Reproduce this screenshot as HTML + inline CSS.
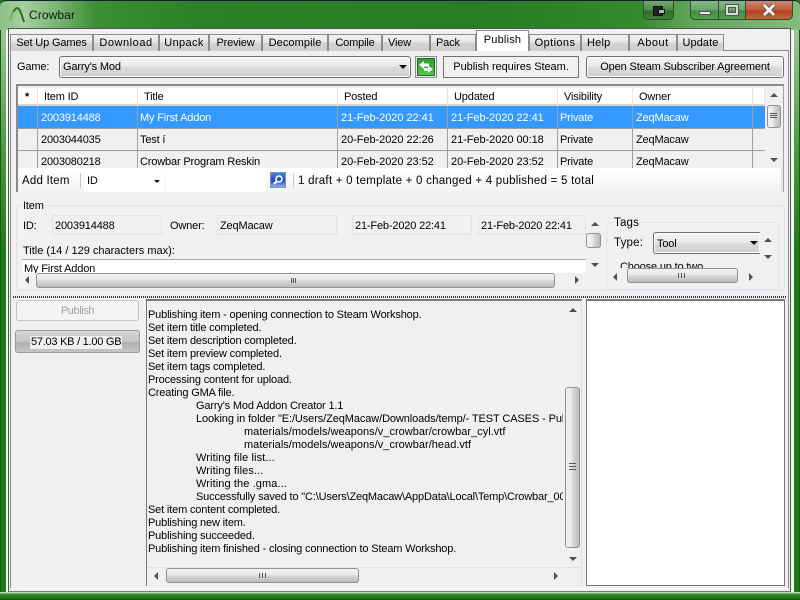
<!DOCTYPE html>
<html><head><meta charset="utf-8"><style>
html,body{margin:0;padding:0;width:800px;height:600px;overflow:hidden;background:#2a7a22}
*{box-sizing:border-box}
body{font:11px/13px "Liberation Sans",sans-serif;color:#000;letter-spacing:-.16px;position:relative}
div,span.a{position:absolute}
.t{position:absolute;white-space:nowrap}
.d{letter-spacing:-.05px}
.frame{left:0;top:0;width:800px;height:600px;border-radius:6px 6px 0 0;background:#2f8a27}
.title{left:0;top:0;width:800px;height:30px;background:linear-gradient(90deg,#8dc088 0,#a6d0a0 3%,#7ab674 7%,#3c8f32 12%,#2c8226 25%,#2a7c22 60%,#338a2b 80%,#5fa558 86%,#84bb7d 100%);border-top:1px solid #123;border-radius:6px 6px 0 0}
.sideL{left:0;top:30px;width:9px;height:570px;background:linear-gradient(90deg,#1d5a17 0,#1d5a17 1px,transparent 1px,transparent 6px,#f4f8f3 6px,#f4f8f3 8px,#f0f0f0 8px),linear-gradient(#9cc896,#4a9a40 120px,#1f7a1a 220px)}
.sideR{left:791px;top:30px;width:9px;height:570px;background:linear-gradient(270deg,#1d5a17 0,#1d5a17 1px,transparent 1px,transparent 6px,#f4f8f3 6px,#f4f8f3 8px,#f0f0f0 8px),linear-gradient(#9cc896,#4a9a40 120px,#1f7a1a 220px)}
.client{left:8px;top:28px;width:783px;height:564px;background:#f0f0f0;border:1px solid #555;border-bottom:1px solid #777}
.bot{left:0;top:592px;width:800px;height:8px;background:linear-gradient(#e4efe2,#2f8a27 30%,#1f7a1a 70%,#174f12)}
.tab{position:absolute;top:34px;height:17px;background:linear-gradient(#f3f3f3,#e6e6e6 45%,#d2d2d2 50%,#cfcfcf);border:1px solid #898c95;border-bottom:none;text-align:center;line-height:16px;letter-spacing:-.15px}
.tab.on{top:30px;height:21px;background:#fff;line-height:18px;z-index:3}
.panel{left:10px;top:50px;width:779px;height:539px;background:#f0f0f0;border:1px solid #898c95;border-bottom:1px solid #fff}
.btn{position:absolute;background:linear-gradient(#f3f3f3,#ebebeb 45%,#dcdcdc 50%,#cfcfcf);border:1px solid #707070;border-radius:3px;text-align:center;box-shadow:inset 0 0 0 1px #fbfbfb}
.hd{position:absolute;top:88px;height:18px;line-height:19px;background:#fff;border-right:1px solid #e4e5e7;border-bottom:2px solid #d5d5d5;padding-left:6px}
.ro{position:absolute;top:215px;height:20px;border:1px solid #dde3ea;background:#f0f0f0;line-height:20px;padding-left:2px;white-space:nowrap;overflow:hidden}
.sb{position:absolute;background:#f0f0f0}
.thumbH{position:absolute;background:linear-gradient(#f2f2f2,#e9e9e9 45%,#d9d9d9 50%,#bcbcbc);border:1px solid #929292;border-radius:3px}
.thumbV{position:absolute;background:linear-gradient(90deg,#f2f2f2,#e9e9e9 45%,#d9d9d9 50%,#bcbcbc);border:1px solid #929292;border-radius:3px}
.up,.dn,.lf,.rt{position:absolute;width:0;height:0}
.up{border:4px solid transparent;border-top:0;border-bottom:4px solid #505050}
.dn{border:4px solid transparent;border-bottom:0;border-top:4px solid #505050}
.lf{border:4px solid transparent;border-left:0;border-right:4px solid #505050}
.rt{border:4px solid transparent;border-right:0;border-left:4px solid #505050}
.gH{position:absolute;width:1px;height:5px;background:#555}
.gV{position:absolute;width:7px;height:1px;background:#555}
.grp{position:absolute;border:1px solid #dde3ea;border-radius:3px}
.splitter{left:13px;top:296px;width:773px;height:2px;background:repeating-linear-gradient(90deg,#333 0,#333 1px,#f0f0f0 1px,#f0f0f0 2px)}
.wb{position:absolute;top:1px;height:19px;border:1px solid #2c5028;border-top:none}
</style></head><body>
<div class="frame"></div>
<div class="title"></div>
<svg style="position:absolute;left:8px;top:6px" width="20" height="20"><path d="M2 15C4 8 7 2 9 2C12 2 14 10 16 16" fill="none" stroke="#2f6d2a" stroke-width="2"/><path d="M2 15C3 12 4 9 6 6" fill="none" stroke="#8dc05a" stroke-width="2"/></svg>
<span class="t" style="left:29px;top:9px;font-size:12px;color:#101a10;letter-spacing:.1px">Crowbar</span>
<div class="wb" style="left:643px;width:31px;border-radius:0 0 5px 5px;background:linear-gradient(#7aa876,#4d8a47 50%,#2e7028 55%,#3d7f36)"></div>
<div style="left:653px;top:6px;width:10px;height:10px;background:#222;border:1px solid #111"></div>
<div style="left:658px;top:9px;width:7px;height:5px;background:#9bc596;border:1px solid #111"></div>
<div class="wb" style="left:690px;width:29px;border-radius:0 0 0 5px;border-right:none;background:linear-gradient(#8bb886,#6ba566 50%,#478a40 55%,#5b9b54)"></div>
<div class="wb" style="left:718px;width:28px;border-right:none;background:linear-gradient(#8bb886,#6ba566 50%,#478a40 55%,#5b9b54)"></div>
<div class="wb" style="left:745px;width:48px;border-radius:0 0 5px 0;background:linear-gradient(#c98a70,#c2593a 50%,#b43e1c 55%,#c2653f)"></div>
<div style="left:699px;top:11px;width:12px;height:4px;background:#e4ebe4;border:1px solid #555"></div>
<div style="left:726px;top:5px;width:12px;height:10px;border:2px solid #d4e0d4;box-shadow:0 0 0 1px #555,inset 0 0 0 1px #555"></div>
<svg style="position:absolute;left:762px;top:4px" width="14" height="12"><path d="M2 1L12 11M12 1L2 11" stroke="#555" stroke-width="4.5"/><path d="M2 1L12 11M12 1L2 11" stroke="#f4f4f4" stroke-width="2.8"/></svg>
<div class="sideL"></div><div class="sideR"></div><div class="bot"></div>
<div class="client"></div>
<div class="panel"></div>
<div class="tab" style="left:10px;width:83px">Set Up Games</div>
<div class="tab" style="left:93px;width:66px;letter-spacing:.55px">Download</div>
<div class="tab" style="left:159px;width:50px;letter-spacing:.35px">Unpack</div>
<div class="tab" style="left:209px;width:53px">Preview</div>
<div class="tab" style="left:262px;width:66px;letter-spacing:.1px">Decompile</div>
<div class="tab" style="left:328px;width:54px">Compile</div>
<div class="tab" style="left:382px;width:48px;text-align:left;padding-left:5px">View</div>
<div class="tab" style="left:430px;width:46px;text-align:left;padding-left:5px">Pack</div>
<div class="tab on" style="left:476px;width:53px;letter-spacing:.2px">Publish</div>
<div class="tab" style="left:529px;width:52px;letter-spacing:.4px">Options</div>
<div class="tab" style="left:581px;width:48px;text-align:left;padding-left:5px;letter-spacing:.2px">Help</div>
<div class="tab" style="left:629px;width:48px;letter-spacing:.5px">About</div>
<div class="tab" style="left:677px;width:47px;letter-spacing:.1px">Update</div>

<span class="t" style="left:17px;top:61px">Game:</span>
<div class="btn" style="left:59px;top:56px;width:352px;height:22px;text-align:left;padding-left:3px;line-height:21px">Garry's Mod</div>
<div class="dn" style="left:399px;top:65px;border-top-color:#111"></div>
<div style="left:415px;top:56px;width:22px;height:22px;border:1px solid #8c8f8c;background:#eee"></div>
<div style="left:417px;top:58px;width:18px;height:18px;background:linear-gradient(#2f9e2b,#58c24e);border:1px solid #1f6d1c"></div>
<svg style="position:absolute;left:417px;top:58px" width="18" height="18"><path d="M2 7L7 3V5.500H12V8.500H7V11Z" fill="#fff"/><path d="M16 11L11 15V13H7V10H11V8Z" fill="#e8f5e8"/></svg>
<div style="left:443px;top:56px;width:136px;height:22px;border:1px solid #707070;background:#f0f0f0;text-align:center;line-height:21px;border-radius:1px;letter-spacing:-.06px">Publish requires Steam.</div>
<div class="btn" style="left:586px;top:56px;width:198px;height:22px;line-height:21px;letter-spacing:-.13px">Open Steam Subscriber Agreement</div>

<div style="left:16px;top:84px;width:768px;height:108px;background:#f0f0f0;border:2px solid #8a8a8a;border-bottom:none;border-right:1px solid #a0a0a0"></div>
<div class="hd" style="left:18px;width:20px;padding-left:7px;font-weight:bold">*</div>
<div class="hd" style="left:38px;width:100px">Item ID</div>
<div class="hd" style="left:138px;width:200px">Title</div>
<div class="hd" style="left:338px;width:110px">Posted</div>
<div class="hd" style="left:448px;width:110px">Updated</div>
<div class="hd" style="left:558px;width:75px">Visibility</div>
<div class="hd" style="left:633px;width:120px">Owner</div>
<div class="hd" style="left:753px;width:12px"></div>
<div style="left:18px;top:106px;width:747px;height:63px;background:#f0f0f0;overflow:hidden">
<div style="left:0;top:0;width:747px;height:22px;background:#3399ff"></div>
</div>
<div style="left:18px;top:128px;width:747px;height:1px;background:#a0a0a0"></div>
<div style="left:18px;top:150px;width:747px;height:1px;background:#a0a0a0"></div>
<div style="left:37px;top:106px;width:1px;height:63px;background:#a0a0a0"></div>
<div style="left:137px;top:106px;width:1px;height:63px;background:#a0a0a0"></div>
<div style="left:337px;top:106px;width:1px;height:63px;background:#a0a0a0"></div>
<div style="left:447px;top:106px;width:1px;height:63px;background:#a0a0a0"></div>
<div style="left:557px;top:106px;width:1px;height:63px;background:#a0a0a0"></div>
<div style="left:632px;top:106px;width:1px;height:63px;background:#a0a0a0"></div>
<div style="left:752px;top:106px;width:1px;height:63px;background:#a0a0a0"></div>
<span class="t" style="left:41px;top:112px;color:#fff">2003914488</span><span class="t" style="left:140px;top:112px;color:#fff">My First Addon</span><span class="t d" style="left:341px;top:112px;color:#fff">21-Feb-2020 22:41</span><span class="t d" style="left:451px;top:112px;color:#fff">21-Feb-2020 22:41</span><span class="t" style="left:560px;top:112px;color:#fff">Private</span><span class="t" style="left:636px;top:112px;color:#fff">ZeqMacaw</span>
<span class="t" style="left:41px;top:134px">2003044035</span><span class="t" style="left:140px;top:134px">Test í</span><span class="t d" style="left:341px;top:134px">20-Feb-2020 22:26</span><span class="t d" style="left:451px;top:134px">21-Feb-2020 00:18</span><span class="t" style="left:560px;top:134px">Private</span><span class="t" style="left:636px;top:134px">ZeqMacaw</span>
<span class="t" style="left:41px;top:156px">2003080218</span><span class="t" style="left:140px;top:156px">Crowbar Program Reskin</span><span class="t d" style="left:341px;top:156px">20-Feb-2020 23:52</span><span class="t d" style="left:451px;top:156px">20-Feb-2020 23:52</span><span class="t" style="left:560px;top:156px">Private</span><span class="t" style="left:636px;top:156px">ZeqMacaw</span>
<div class="sb" style="left:765px;top:86px;width:18px;height:83px"></div>
<div class="up" style="left:770px;top:93px"></div>
<div class="thumbV" style="left:767px;top:105px;width:14px;height:23px"></div>
<div class="gV" style="left:770px;top:113px"></div><div class="gV" style="left:770px;top:115px"></div><div class="gV" style="left:770px;top:117px"></div>
<div class="dn" style="left:770px;top:158px"></div>

<div style="left:18px;top:168px;width:764px;height:25px;background:linear-gradient(#fff,#f3f3f3);border-right:1px solid #ddd"></div>
<span class="t" style="left:22px;top:175px;font-size:11.500px;letter-spacing:.2px">Add Item</span>
<div style="left:80px;top:173px;width:1px;height:15px;background:#c8c8c8"></div>
<div style="left:84px;top:169px;width:80px;height:23px;background:#fff"></div>
<span class="t" style="left:87px;top:175px">ID</span>
<div class="dn" style="left:154px;top:180px;border-width:3px;border-bottom:0;border-top-color:#111"></div>
<div style="left:166px;top:169px;width:100px;height:23px;background:#fff"></div>
<div style="left:270px;top:172px;width:16px;height:16px;background:linear-gradient(#4c7fd6,#1f4fb0 55%,#8fb0ec);border:1px solid #7b93bb"></div>
<svg style="position:absolute;left:270px;top:172px" width="16" height="16"><circle cx="9" cy="7" r="3" fill="none" stroke="#fff" stroke-width="1.500"/><path d="M7 9L4 12" stroke="#fff" stroke-width="2"/></svg>
<div style="left:293px;top:173px;width:1px;height:15px;background:#c8c8c8"></div>
<span class="t" style="left:298px;top:175px;font-size:11.500px;letter-spacing:.24px">1 draft + 0 template + 0 changed + 4 published = 5 total</span>

<div class="grp" style="left:16px;top:205px;width:769px;height:86px"></div>
<span class="t" style="left:22px;top:200px;background:#f0f0f0;padding:0 1px">Item</span>
<span class="t" style="left:23px;top:220px">ID:</span>
<div class="ro" style="left:52px;width:110px">2003914488</div>
<span class="t" style="left:170px;top:220px">Owner:</span>
<div class="ro" style="left:217px;width:120px">ZeqMacaw</div>
<div class="ro" style="left:352px;width:120px">21-Feb-2020 22:41</div>
<div class="ro" style="left:478px;width:108px">21-Feb-2020 22:41</div>
<span class="t" style="left:23px;top:245px;letter-spacing:0">Title (14 / 129 characters max):</span>
<div style="left:22px;top:259px;width:564px;height:14px;background:#fff;border-top:1px solid #a8a8a8;overflow:hidden"><span class="t" style="left:2px;top:3px">My First Addon</span></div>
<div class="sb" style="left:586px;top:215px;width:16px;height:62px"></div>
<div class="up" style="left:591px;top:222px"></div>
<div class="thumbV" style="left:586px;top:233px;width:15px;height:15px"></div>
<div class="dn" style="left:591px;top:263px"></div>
<div class="sb" style="left:22px;top:273px;width:562px;height:16px"></div>
<div class="lf" style="left:25px;top:276px;border-width:4px"></div>
<div class="thumbH" style="left:36px;top:273px;width:519px;height:15px"></div>
<div class="gH" style="left:291px;top:278px"></div><div class="gH" style="left:293px;top:278px"></div><div class="gH" style="left:295px;top:278px"></div>
<div class="rt" style="left:575px;top:276px"></div>

<div class="grp" style="left:606px;top:222px;width:173px;height:68px"></div>
<span class="t" style="left:613px;top:217px;background:#f0f0f0;padding:0 1px;font-size:11.500px;letter-spacing:.2px">Tags</span>
<span class="t" style="left:614px;top:237px;font-size:11.500px;letter-spacing:.2px">Type:</span>
<div class="btn" style="left:653px;top:232px;width:107px;height:22px;text-align:left;padding-left:3px;line-height:22px;border-right:none;border-radius:3px 0 0 3px">Tool</div>
<div class="dn" style="left:750px;top:241px;border-top-color:#111"></div>
<div class="up" style="left:764px;top:238px"></div>
<div class="dn" style="left:764px;top:255px"></div>
<div style="left:620px;top:261px;width:140px;height:7px;overflow:hidden"><span class="t" style="left:0;top:0">Choose up to two</span></div>
<div class="lf" style="left:613px;top:273px"></div>
<div class="thumbH" style="left:627px;top:268px;width:111px;height:15px"></div>
<div class="gH" style="left:678px;top:273px"></div><div class="gH" style="left:681px;top:273px"></div><div class="gH" style="left:684px;top:273px"></div>
<div class="rt" style="left:749px;top:273px"></div>

<div class="splitter"></div>

<div style="left:16px;top:300px;width:123px;height:21px;border:1px solid #c4c4c4;border-radius:3px;background:#f4f4f4;color:#a0a0a0;text-align:center;line-height:21px;letter-spacing:-.4px">Publish</div>
<div style="left:15px;top:330px;width:125px;height:23px;border:1px solid #9c9c9c;border-radius:3px;background:linear-gradient(#d6d6d6,#c4c4c4 50%,#aeaeae 55%,#c6c6c6);"></div>
<span class="t" style="left:30px;top:336px;background:#f0f0f0;padding:0 1px;letter-spacing:-.25px">57.03 KB / 1.00 GB</span>

<div style="left:146px;top:299px;width:436px;height:287px;border:1px solid #777;border-top:2px solid #777;border-bottom:none;border-right:1px solid #ddd;background:#f0f0f0"></div>
<div style="left:148px;top:302px;width:415px;height:262px;overflow:hidden;line-height:13px">
<span class="t" style="left:0;top:7px">Publishing item - opening connection to Steam Workshop.</span>
<span class="t" style="left:0;top:20px">Set item title completed.</span>
<span class="t" style="left:0;top:33px">Set item description completed.</span>
<span class="t" style="left:0;top:46px">Set item preview completed.</span>
<span class="t" style="left:0;top:59px">Set item tags completed.</span>
<span class="t" style="left:0;top:72px">Processing content for upload.</span>
<span class="t" style="left:0;top:85px">Creating GMA file.</span>
<span class="t" style="left:48px;top:98px">Garry's Mod Addon Creator 1.1</span>
<span class="t" style="left:48px;top:111px;letter-spacing:-.1px">Looking in folder "E:/Users/ZeqMacaw/Downloads/temp/- TEST CASES - Publish</span>
<span class="t" style="left:96px;top:124px;letter-spacing:.02px">materials/models/weapons/v_crowbar/crowbar_cyl.vtf</span>
<span class="t" style="left:96px;top:137px;letter-spacing:.02px">materials/models/weapons/v_crowbar/head.vtf</span>
<span class="t" style="left:48px;top:150px;letter-spacing:.1px">Writing file list...</span>
<span class="t" style="left:48px;top:163px;letter-spacing:.1px">Writing files...</span>
<span class="t" style="left:48px;top:176px;letter-spacing:.1px">Writing the .gma...</span>
<span class="t" style="left:48px;top:189px">Successfully saved to "C:\Users\ZeqMacaw\AppData\Local\Temp\Crowbar_0000000</span>
<span class="t" style="left:0;top:202px">Set item content completed.</span>
<span class="t" style="left:0;top:215px">Publishing new item.</span>
<span class="t" style="left:0;top:228px">Publishing succeeded.</span>
<span class="t" style="left:0;top:241px">Publishing item finished - closing connection to Steam Workshop.</span>
</div>
<div class="up" style="left:569px;top:308px"></div>
<div class="thumbV" style="left:565px;top:387px;width:15px;height:161px"></div>
<div class="gV" style="left:569px;top:463px"></div><div class="gV" style="left:569px;top:466px"></div><div class="gV" style="left:569px;top:469px"></div>
<div class="dn" style="left:569px;top:557px"></div>
<div style="left:147px;top:567px;width:434px;height:1px;background:#e2e2e2"></div>
<div class="lf" style="left:154px;top:572px"></div>
<div class="thumbH" style="left:166px;top:568px;width:193px;height:15px"></div>
<div class="gH" style="left:259px;top:573px"></div><div class="gH" style="left:262px;top:573px"></div><div class="gH" style="left:265px;top:573px"></div>
<div class="rt" style="left:554px;top:572px"></div>

<div style="left:586px;top:299px;width:199px;height:287px;background:#fff;border:1px solid #777;border-top:2px solid #777"></div>
</body></html>
